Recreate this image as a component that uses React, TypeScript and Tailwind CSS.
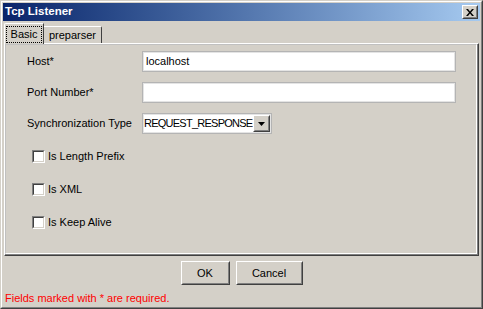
import React from "react";

function Raised({ className = "", children }: { className?: string; children?: React.ReactNode }) {
  return (
    <div className={`border border-t-white border-l-white border-r-[#404040] border-b-[#404040] ${className}`}>
      <div className="w-full h-full border border-t-[#d4d0c8] border-l-[#d4d0c8] border-r-[#808080] border-b-[#808080] flex items-center justify-center">
        {children}
      </div>
    </div>
  );
}

function TextField({ value = "", w }: { value?: string; w: string }) {
  return (
    <div className={`${w} h-[21px] border border-[#b4b4b4] bg-white`}>
      <div className="w-full h-full border border-[#e4e4e4] flex items-center pl-[2px]">
        <span className="leading-none">{value}</span>
      </div>
    </div>
  );
}

function Checkbox({ label }: { label: string }) {
  return (
    <div className="flex items-center h-[13px] ml-[5px]">
      <div className="w-[13px] h-[13px] flex-none border border-t-[#808080] border-l-[#808080] border-r-white border-b-white">
        <div className="w-full h-full border border-t-[#404040] border-l-[#404040] border-r-[#d4d0c8] border-b-[#d4d0c8] bg-white" />
      </div>
      <span className="ml-[3px] leading-none">{label}</span>
    </div>
  );
}

export default function App() {
  return (
    <div className="w-[483px] h-[309px] bg-[#d4d0c8] text-black text-[11px] font-['Liberation_Sans',Arial,sans-serif] border border-t-[#d4d0c8] border-l-[#d4d0c8] border-r-[#404040] border-b-[#404040]">
      <div className="w-full h-full border border-t-white border-l-white border-r-[#808080] border-b-[#808080] p-px flex flex-col">
        {/* Title bar */}
        <div className="h-[18px] flex items-center justify-between bg-gradient-to-r from-[#0a246a] to-[#a6caf0] pl-[2px] pr-[2px]">
          <span className="text-white font-bold text-[11.5px] leading-none">Tcp Listener</span>
          <Raised className="w-[16px] h-[14px] bg-[#d4d0c8]">
            <svg width="8" height="7" viewBox="0 0 8 7">
              <path d="M0 0h2l2 2.5L6 0h2L5 3.5 8 7H6L4 4.5 2 7H0l3-3.5z" fill="black" />
            </svg>
          </Raised>
        </div>

        {/* Tabs */}
        <div className="h-[23px] -mb-px relative z-10 flex items-end pl-px">
          <div className="w-[40px] h-[21px] bg-[#d4d0c8] border-l border-t border-r border-l-white border-t-white border-r-[#404040] rounded-tl-[2px] flex items-center pl-px">
            <div className="w-[36px] h-[17px] border border-dotted border-black flex items-center justify-center">
              <span className="leading-none">Basic</span>
            </div>
          </div>
          <div className="w-[58px] h-[17px] mb-px bg-[#d4d0c8] border-t border-r border-t-white border-r-[#404040] rounded-tr-[2px] flex items-center justify-center">
            <span className="leading-none">preparser</span>
          </div>
        </div>

        {/* Tab panel */}
        <div className="mx-px h-[213px] border border-t-white border-l-white border-r-[#404040] border-b-[#404040]">
          <div className="w-full h-full border-r border-b border-r-[#808080] border-b-[#808080]">
            <div className="w-full h-full border border-t-[#c0c0c0] border-l-[#c0c0c0] border-r-white border-b-white pl-[21px] pt-[6px] flex flex-col">
              <div className="flex flex-col gap-[10px]">
                <div className="flex items-center h-[21px]">
                  <span className="w-[115px]">Host*</span>
                  <TextField w="w-[314px]" value="localhost" />
                </div>
                <div className="flex items-center h-[21px]">
                  <span className="w-[115px]">Port Number*</span>
                  <TextField w="w-[314px]" />
                </div>
                <div className="flex items-center h-[21px]">
                  <span className="w-[115px]">Synchronization Type</span>
                  <div className="w-[130px] h-[21px] border border-[#b4b4b4] bg-white">
                    <div className="w-full h-full border border-[#e4e4e4] flex items-center">
                      <span className="flex-1 min-w-0 whitespace-nowrap tracking-[-0.75px] leading-none">REQUEST_RESPONSE</span>
                      <Raised className="w-[17px] h-[17px] flex-none bg-[#d4d0c8]">
                        <svg width="7" height="4" viewBox="0 0 7 4">
                          <path d="M0 0h7L3.5 4z" fill="black" />
                        </svg>
                      </Raised>
                    </div>
                  </div>
                </div>
              </div>
              <div className="flex flex-col gap-[20px] mt-[16px]">
                <Checkbox label="Is Length Prefix" />
                <Checkbox label="Is XML" />
                <Checkbox label="Is Keep Alive" />
              </div>
            </div>
          </div>
        </div>

        {/* Buttons */}
        <div className="flex justify-center gap-[6px] pt-[5px]">
          <Raised className="w-[49px] h-[24px] bg-[#d4d0c8]">
            <span className="leading-none">OK</span>
          </Raised>
          <Raised className="w-[67px] h-[24px] bg-[#d4d0c8]">
            <span className="leading-none">Cancel</span>
          </Raised>
        </div>
        <div className="pl-[2px] mt-[7px] text-[#ff0000] leading-[13px]">Fields marked with * are required.</div>
      </div>
    </div>
  );
}
